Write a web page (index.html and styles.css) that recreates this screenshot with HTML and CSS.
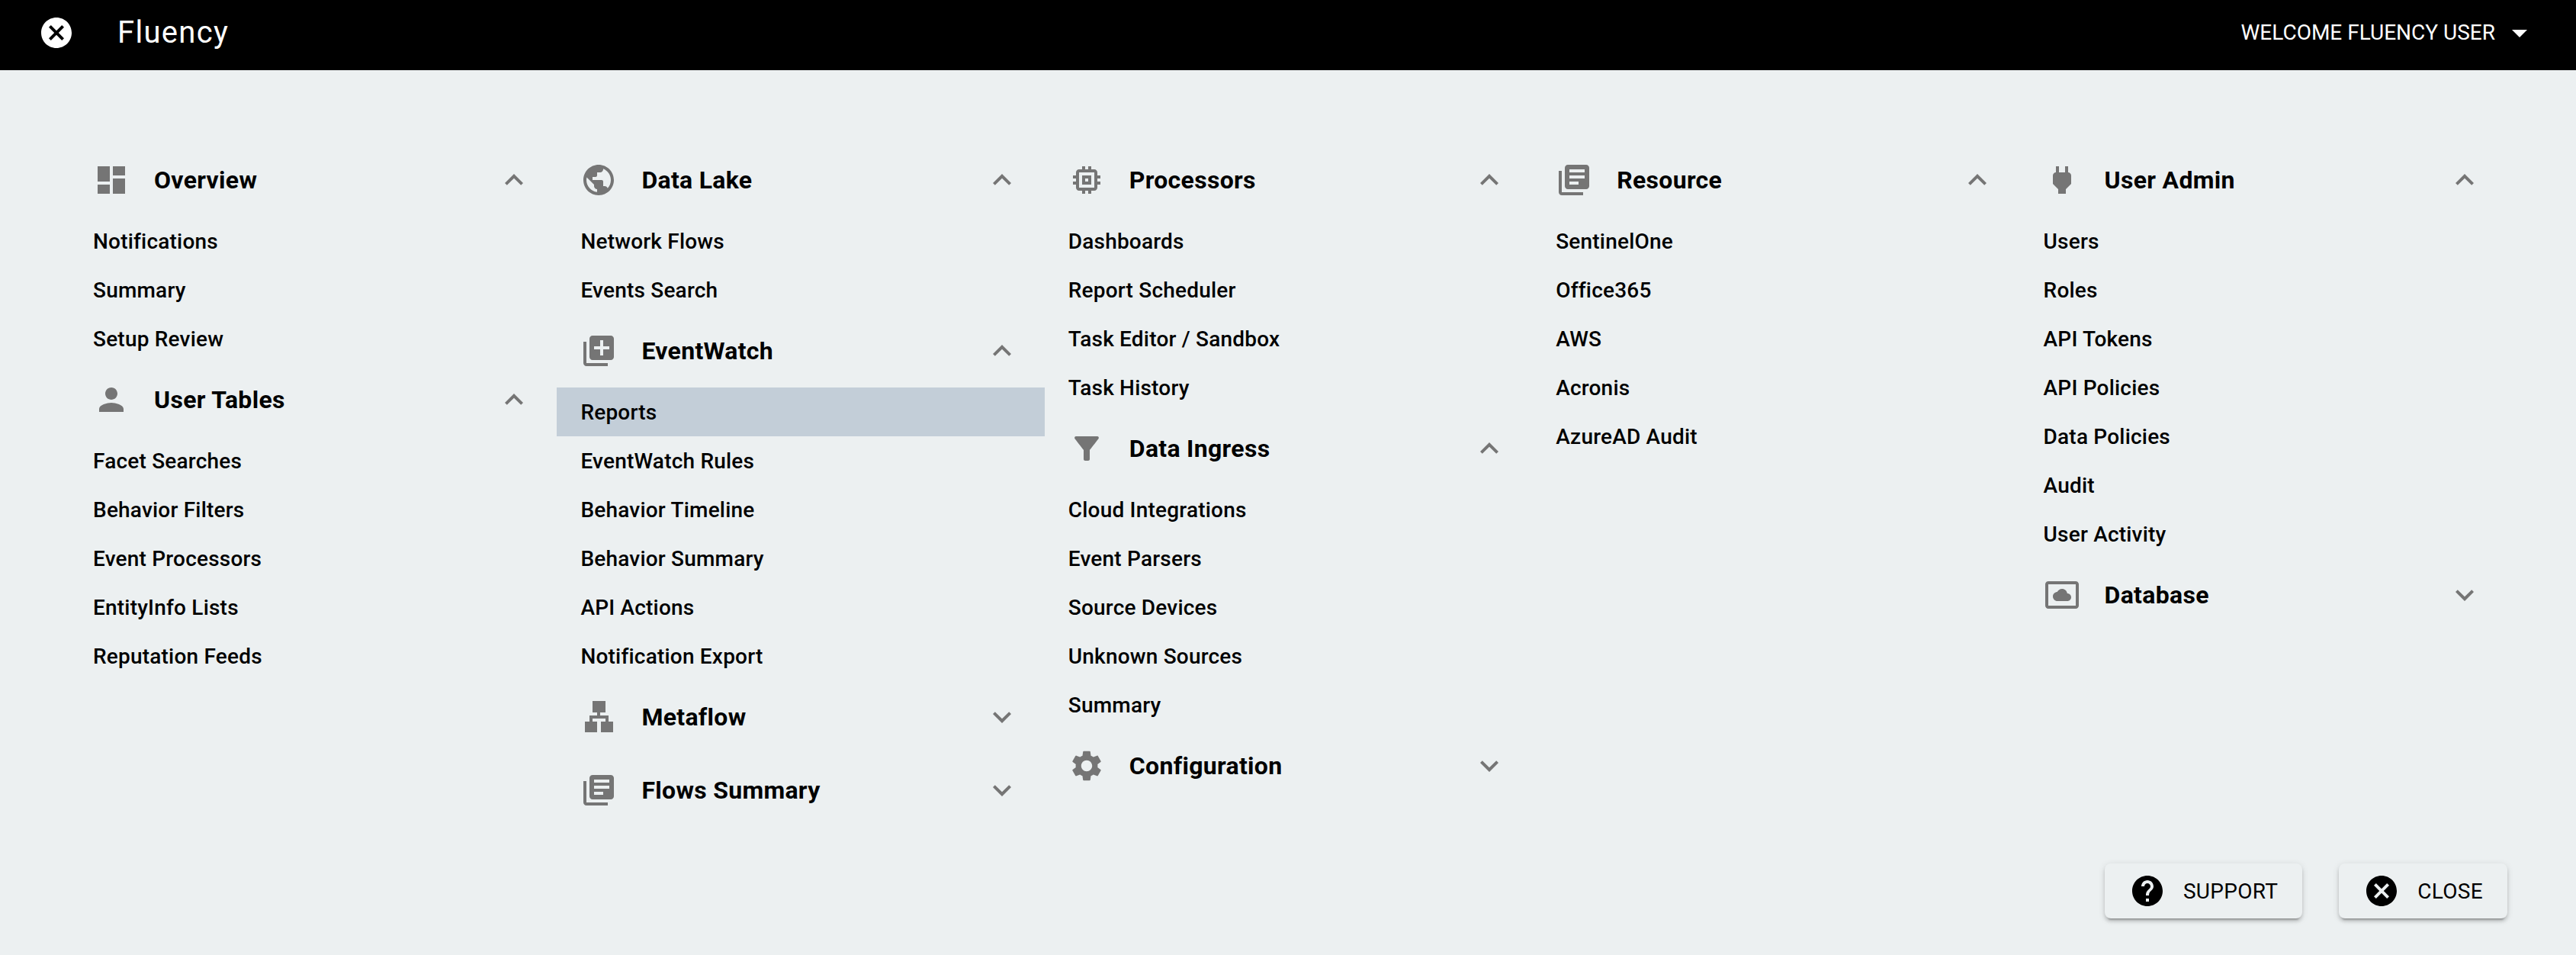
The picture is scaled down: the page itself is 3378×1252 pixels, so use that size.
FILE: index.html
```html
<!DOCTYPE html>
<html lang="en">
<head>
<meta charset="utf-8">
<title>Fluency</title>
<link rel="stylesheet" href="styles.css">
</head>
<body>
<svg class="defs" width="0" height="0" aria-hidden="true">
  <defs>
    <symbol id="i-cancel" viewBox="0 0 24 24"><path d="M12 2C6.47 2 2 6.47 2 12s4.47 10 10 10 10-4.47 10-10S17.53 2 12 2zm5 13.59L15.59 17 12 13.41 8.41 17 7 15.59 10.59 12 7 8.41 8.41 7 12 10.59 15.59 7 17 8.41 13.41 12 17 15.59z"/></symbol>
    <symbol id="i-drop" viewBox="0 0 24 24"><path d="M7 10l5 5 5-5z"/></symbol>
    <symbol id="i-less" viewBox="0 0 24 24"><path d="M12 8l-6 6 1.41 1.41L12 10.83l4.59 4.58L18 14z"/></symbol>
    <symbol id="i-more" viewBox="0 0 24 24"><path d="M16.59 8.59L12 13.17 7.41 8.59 6 10l6 6 6-6z"/></symbol>
    <symbol id="i-dashboard" viewBox="0 0 24 24"><path d="M3 13h8V3H3v10zm0 8h8v-6H3v6zm10 0h8V11h-8v10zm0-18v6h8V3h-8z"/></symbol>
    <symbol id="i-person" viewBox="0 0 24 24"><path d="M12 12c2.21 0 4-1.79 4-4s-1.79-4-4-4-4 1.79-4 4 1.79 4 4 4zm0 2c-2.67 0-8 1.34-8 4v2h16v-2c0-2.66-5.33-4-8-4z"/></symbol>
    <symbol id="i-public" viewBox="0 0 24 24"><path d="M12 2C6.48 2 2 6.48 2 12s4.48 10 10 10 10-4.48 10-10S17.52 2 12 2zm-1 17.93c-3.95-.49-7-3.85-7-7.93 0-.62.08-1.21.21-1.79L9 15v1c0 1.1.9 2 2 2v1.93zm6.9-2.54c-.26-.81-1-1.39-1.9-1.39h-1v-3c0-.55-.45-1-1-1H8v-2h2c.55 0 1-.45 1-1V7h2c1.1 0 2-.9 2-2v-.41c2.93 1.19 5 4.06 5 7.41 0 2.08-.8 3.97-2.1 5.39z"/></symbol>
    <symbol id="i-libadd" viewBox="0 0 24 24"><path d="M4 6H2v14c0 1.1.9 2 2 2h14v-2H4V6zm16-4H8c-1.1 0-2 .9-2 2v12c0 1.1.9 2 2 2h12c1.1 0 2-.9 2-2V4c0-1.1-.9-2-2-2zm-1 9h-4v4h-2v-4H9V9h4V5h2v4h4v2z"/></symbol>
    <symbol id="i-books" viewBox="0 0 24 24"><path d="M4 6H2v14c0 1.1.9 2 2 2h14v-2H4V6zm16-4H8c-1.1 0-2 .9-2 2v12c0 1.1.9 2 2 2h12c1.1 0 2-.9 2-2V4c0-1.1-.9-2-2-2zm-1 9H9V9h10v2zm-4 4H9v-2h6v2zm4-8H9V5h10v2z"/></symbol>
    <symbol id="i-sitemap" viewBox="0 0 24 24"><path d="M8 1.500h8.500V9H13v2h5.500v4h3v7h-8v-7h3v-2H8v2h3v7H3v-7h3v-4h5V9H8z"/></symbol>
    <symbol id="i-memory" viewBox="0 0 24 24"><path d="M15 9H9v6h6V9zm-2 4h-2v-2h2v2zm8-2V9h-2V7c0-1.1-.9-2-2-2h-2V3h-2v2h-2V3H9v2H7c-1.1 0-2 .9-2 2v2H3v2h2v2H3v2h2v2c0 1.1.9 2 2 2h2v2h2v-2h2v2h2v-2h2c1.100 0 2-.9 2-2v-2h2v-2h-2v-2h2zm-4 6H7V7h10v10z"/></symbol>
    <symbol id="i-filter" viewBox="0 0 24 24"><path d="M4.25 5.61C6.27 8.2 10 13 10 13v6c0 .55.45 1 1 1h2c.55 0 1-.45 1-1v-6s3.72-4.8 5.74-7.39c.51-.66.04-1.61-.79-1.61H5.04c-.83 0-1.3.95-.79 1.61z"/></symbol>
    <symbol id="i-settings" viewBox="0 0 24 24"><path d="M19.14 12.94c.04-.3.06-.61.06-.94 0-.32-.02-.64-.07-.94l2.03-1.58c.18-.14.23-.41.12-.61l-1.92-3.32c-.12-.22-.37-.29-.59-.22l-2.39.96c-.5-.38-1.03-.7-1.62-.94l-.36-2.54c-.04-.24-.24-.41-.48-.41h-3.84c-.24 0-.43.17-.47.41l-.36 2.54c-.59.24-1.13.57-1.62.94l-2.39-.96c-.22-.08-.47 0-.59.22L2.74 8.87c-.12.21-.08.47.12.61l2.03 1.58c-.05.3-.09.63-.09.94s.02.64.07.94l-2.03 1.58c-.18.14-.23.41-.12.61l1.92 3.32c.12.22.37.29.59.22l2.39-.96c.5.38 1.03.7 1.62.94l.36 2.54c.05.24.24.41.48.41h3.84c.24 0 .44-.17.47-.41l.36-2.54c.59-.24 1.13-.56 1.62-.94l2.39.96c.22.08.47 0 .59-.22l1.92-3.32c.12-.22.07-.47-.12-.61l-2.01-1.58zM12 15.6c-1.98 0-3.6-1.62-3.6-3.6s1.62-3.6 3.6-3.6 3.6 1.62 3.6 3.6-1.62 3.6-3.6 3.6z"/></symbol>
    <symbol id="i-power" viewBox="0 0 24 24"><path d="M16.01 7L16 3h-2v4h-4V3H8v4h-.01C7 6.99 6 7.99 6 8.99v5.49L9.5 18v3h5v-3l3.5-3.51v-5.5c0-1-1-2-1.99-1.99z"/></symbol>
    <symbol id="i-cloudbox" viewBox="0 0 24 24"><path d="M9 16h6.500c1.380 0 2.500-1.120 2.500-2.500S16.880 11 15.500 11h-.05c-.24-1.690-1.690-3-3.450-3-1.400 0-2.600.83-3.160 2.020h-.16C7.170 10.180 6 11.450 6 13c0 1.660 1.340 3 3 3zM21 3H3c-1.100 0-2 .9-2 2v14c0 1.100.9 2 2 2h18c1.100 0 2-.9 2-2V5c0-1.100-.9-2-2-2zm0 16.010H3V4.990h18v14.020z"/></symbol>
    <symbol id="i-help" viewBox="0 0 24 24"><path d="M12 2C6.480 2 2 6.480 2 12s4.480 10 10 10 10-4.480 10-10S17.520 2 12 2zm1 17h-2v-2h2v2zm2.070-7.750l-.9.920C13.450 12.900 13 13.500 13 15h-2v-.5c0-1.100.45-2.100 1.170-2.830l1.240-1.260c.37-.36.59-.86.59-1.410 0-1.100-.9-2-2-2s-2 .9-2 2H8c0-2.210 1.790-4 4-4s4 1.790 4 4c0 .88-.36 1.680-.93 2.250z"/></symbol>
  </defs>
</svg>

<div class="page">
  <header class="toolbar">
    <svg class="icon toolbar-close"><use href="#i-cancel"/></svg>
    <span class="brand">Fluency</span>
    <span class="welcome">WELCOME FLUENCY USER</span>
    <svg class="icon"><use href="#i-drop"/></svg>
  </header>

  <main class="columns">
    <section class="column">
      <div class="group-head"><svg class="icon"><use href="#i-dashboard"/></svg><span class="group-title">Overview</span><svg class="icon"><use href="#i-less"/></svg></div>
      <a class="item">Notifications</a>
      <a class="item">Summary</a>
      <a class="item">Setup Review</a>
      <div class="group-head"><svg class="icon"><use href="#i-person"/></svg><span class="group-title">User Tables</span><svg class="icon"><use href="#i-less"/></svg></div>
      <a class="item">Facet Searches</a>
      <a class="item">Behavior Filters</a>
      <a class="item">Event Processors</a>
      <a class="item">EntityInfo Lists</a>
      <a class="item">Reputation Feeds</a>
    </section>

    <section class="column">
      <div class="group-head"><svg class="icon"><use href="#i-public"/></svg><span class="group-title">Data Lake</span><svg class="icon"><use href="#i-less"/></svg></div>
      <a class="item">Network Flows</a>
      <a class="item">Events Search</a>
      <div class="group-head"><svg class="icon"><use href="#i-libadd"/></svg><span class="group-title">EventWatch</span><svg class="icon"><use href="#i-less"/></svg></div>
      <a class="item item-active">Reports</a>
      <a class="item">EventWatch Rules</a>
      <a class="item">Behavior Timeline</a>
      <a class="item">Behavior Summary</a>
      <a class="item">API Actions</a>
      <a class="item">Notification Export</a>
      <div class="group-head"><svg class="icon"><use href="#i-sitemap"/></svg><span class="group-title">Metaflow</span><svg class="icon"><use href="#i-more"/></svg></div>
      <div class="group-head"><svg class="icon"><use href="#i-books"/></svg><span class="group-title">Flows Summary</span><svg class="icon"><use href="#i-more"/></svg></div>
    </section>

    <section class="column">
      <div class="group-head"><svg class="icon"><use href="#i-memory"/></svg><span class="group-title">Processors</span><svg class="icon"><use href="#i-less"/></svg></div>
      <a class="item">Dashboards</a>
      <a class="item">Report Scheduler</a>
      <a class="item">Task Editor / Sandbox</a>
      <a class="item">Task History</a>
      <div class="group-head"><svg class="icon"><use href="#i-filter"/></svg><span class="group-title">Data Ingress</span><svg class="icon"><use href="#i-less"/></svg></div>
      <a class="item">Cloud Integrations</a>
      <a class="item">Event Parsers</a>
      <a class="item">Source Devices</a>
      <a class="item">Unknown Sources</a>
      <a class="item">Summary</a>
      <div class="group-head"><svg class="icon"><use href="#i-settings"/></svg><span class="group-title">Configuration</span><svg class="icon"><use href="#i-more"/></svg></div>
    </section>

    <section class="column">
      <div class="group-head"><svg class="icon"><use href="#i-books"/></svg><span class="group-title">Resource</span><svg class="icon"><use href="#i-less"/></svg></div>
      <a class="item">SentinelOne</a>
      <a class="item">Office365</a>
      <a class="item">AWS</a>
      <a class="item">Acronis</a>
      <a class="item">AzureAD Audit</a>
    </section>

    <section class="column">
      <div class="group-head"><svg class="icon"><use href="#i-power"/></svg><span class="group-title">User Admin</span><svg class="icon"><use href="#i-less"/></svg></div>
      <a class="item">Users</a>
      <a class="item">Roles</a>
      <a class="item">API Tokens</a>
      <a class="item">API Policies</a>
      <a class="item">Data Policies</a>
      <a class="item">Audit</a>
      <a class="item">User Activity</a>
      <div class="group-head"><svg class="icon"><use href="#i-cloudbox"/></svg><span class="group-title">Database</span><svg class="icon"><use href="#i-more"/></svg></div>
    </section>
  </main>

  <footer class="actions">
    <button class="action"><svg class="icon"><use href="#i-help"/></svg><span class="action-label">SUPPORT</span></button>
    <button class="action"><svg class="icon"><use href="#i-cancel"/></svg><span class="action-label">CLOSE</span></button>
  </footer>
</div>
</body>
</html>
```
FILE: styles.css
```css
* { box-sizing: border-box; }
html, body { margin: 0; padding: 0; height: 100%; }
body {
  background: #ecf0f1;
  color: #000;
  font-family: Roboto, "Liberation Sans", sans-serif;
  overflow: hidden;
}
.defs { position: absolute; }
.page { display: flex; flex-direction: column; height: 100vh; }
.icon { width: 48px; height: 48px; flex: none; fill: currentColor; display: block; }

.toolbar {
  display: flex;
  align-items: center;
  height: 92px;
  flex: none;
  background: #000;
  color: #fff;
  padding: 0 50px 6px;
}
.toolbar-close { margin-right: 56px; }
.brand { font-size: 40px; font-weight: 400; letter-spacing: 1.3px; flex: 1; line-height: 44px; padding-bottom: 1px; }
.welcome { font-size: 28px; font-weight: 400; margin-right: 8px; padding-bottom: 2px; }

.columns {
  flex: 1;
  display: grid;
  grid-template-columns: repeat(5, 1fr);
  align-items: start;
  padding: 96px 90px 0 91px;
}
.column { display: flex; flex-direction: column; min-width: 0; }

.group-head {
  display: flex;
  align-items: center;
  height: 96px;
  padding: 0 32px 0 31px;
  color: #757575;
}
.group-title {
  flex: 1;
  margin-left: 32px;
  font-size: 32px;
  font-weight: 700;
  letter-spacing: .3px;
  color: #000;
}
.item {
  display: flex;
  align-items: center;
  height: 64px;
  padding: 0 32px 0 31px;
  font-size: 28px;
  font-weight: 500;
  letter-spacing: .2px;
}
.item-active { background: #c3ced8; }

.actions {
  display: flex;
  justify-content: flex-end;
  gap: 48px;
  padding: 0 90px 48px;
  flex: none;
}
.action {
  display: flex;
  align-items: center;
  height: 72px;
  padding: 0 32px;
  border: 0;
  border-radius: 8px;
  background: #ecf0f1;
  color: #000;
  font-family: inherit;
  box-shadow: 0 6px 2px -4px rgba(0,0,0,.2), 0 4px 4px 0 rgba(0,0,0,.14), 0 2px 10px 0 rgba(0,0,0,.12);
}
.action-label { margin-left: 23px; font-size: 28px; font-weight: 400; letter-spacing: .3px; }
```
